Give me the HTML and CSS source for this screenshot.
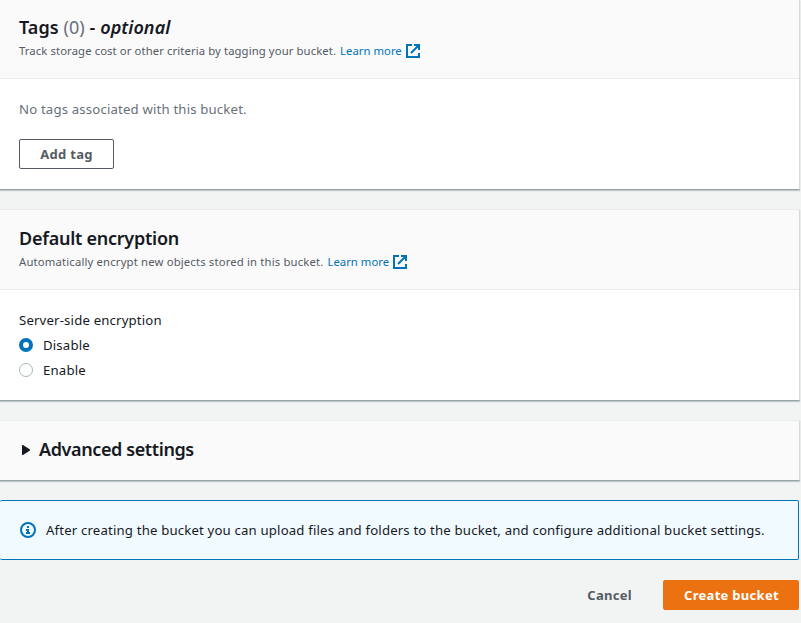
FILE: index.html
```html
<!DOCTYPE html>
<html lang="en">
<head>
<meta charset="utf-8">
<title>Create bucket</title>
<link rel="stylesheet" href="styles.css">
</head>
<body>
<main class="form">
  <section class="card tags">
    <header class="card-header">
      <h2 class="title-tags">Tags <span class="count">(0)</span> - <em>optional</em></h2>
      <p class="description"><span class="desc-tags">Track storage cost or other criteria by tagging your bucket.</span><a>Learn more</a><svg class="external" viewBox="0 0 14 14"><path d="M6 1H1v12h12V9M8 1h5v5M5 9l7.5-7.5"/></svg></p>
    </header>
    <div class="card-body">
      <p class="empty">No tags associated with this bucket.</p>
      <button class="button add-tag">Add tag</button>
    </div>
  </section>
  <section class="card encryption">
    <header class="card-header">
      <h2 class="title-encryption">Default encryption</h2>
      <p class="description"><span class="desc-encryption">Automatically encrypt new objects stored in this bucket.</span><a>Learn more</a><svg class="external" viewBox="0 0 14 14"><path d="M6 1H1v12h12V9M8 1h5v5M5 9l7.5-7.5"/></svg></p>
    </header>
    <div class="card-body">
      <p class="label">Server-side encryption</p>
      <label class="option"><i class="radio checked"></i>Disable</label>
      <label class="option"><i class="radio"></i>Enable</label>
    </div>
  </section>
  <section class="card advanced">
    <svg class="caret" viewBox="0 0 8 10"><path d="M0 0h1l7 4.5v1L1 10H0z"/></svg>
    <h2 class="title-advanced">Advanced settings</h2>
  </section>
  <aside class="notice">
    <svg class="info" viewBox="0 0 16 16"><circle cx="8" cy="8" r="7"/><path d="M7 5h2M6 8h2v3M6 11h4"/></svg>
    <span>After creating the bucket you can upload files and folders to the bucket, and configure additional bucket settings.</span>
  </aside>
  <footer class="actions">
    <button class="button cancel">Cancel</button>
    <button class="button create">Create bucket</button>
  </footer>
</main>
</body>
</html>
```
FILE: styles.css
```css
* { box-sizing: border-box; }
body { margin: 0; background: #f2f3f3; color: #16191f; font: 13.2px/20px "Noto Sans", sans-serif; letter-spacing: .165px; }
h2, p { margin: 0; }
.form { width: 800px; height: 623px; display: flex; flex-direction: column; }
.card { flex: none; background: #fff; margin-bottom: 20px; border-right: 1px solid #d5dbdb; border-bottom: 1px solid #95a5a6; box-shadow: 0 1px 1px #001c2433; }
.tags { height: 190px; }
.encryption { height: 192px; margin-top: -1px; border-top: 1px solid #eaeded; }
.card-header { height: 79px; padding: 16px 19px 0; background: #fafafa; border-bottom: 1px solid #eaeded; }
.encryption .card-header { height: 80px; padding-top: 17px; }
h2 { font-size: 18px; line-height: 22px; font-weight: 600; white-space: nowrap; }
.title-tags { letter-spacing: .07px; }
.title-encryption { letter-spacing: -.25px; }
.title-advanced { margin-top: -2px; letter-spacing: -.39px; }
.count { color: #687078; font-weight: 400; }
.description { display: flex; align-items: center; height: 26px; color: #545b64; font-size: 11.3px; letter-spacing: .1px; white-space: nowrap; }
.desc-encryption { letter-spacing: .163px; }
.description a { color: #0073bb; margin-left: 4px; letter-spacing: .02px; }
.external { width: 14px; height: 14px; margin-left: 4px; fill: none; stroke: #0073bb; stroke-width: 2; }
.card-body { padding: 20px 19px; }
.empty { color: #687078; }
.button { display: flex; align-items: center; justify-content: center; height: 30px; padding: 0; border: 1px solid #545b64; border-radius: 2px; background: #fff; color: #545b64; font: 700 13px/20px "Noto Sans", sans-serif; letter-spacing: .3px; }
.add-tag { width: 95px; margin-top: 20px; }
.label { margin-bottom: 2px; }
.option { display: flex; align-items: center; height: 25px; }
.radio { width: 14px; height: 14px; margin-right: 10px; border: 1px solid #aab7b8; border-radius: 50%; background: #fff; }
.checked { border: 4px solid #0073bb; }
.advanced { height: 61px; margin-top: -1px; display: flex; align-items: center; padding: 0 0 2px 22px; background: #fafafa; border-top: 1px solid #eaeded; }
.caret { width: 8px; height: 10px; margin-right: 9px; fill: #16191f; }
.notice { flex: none; display: flex; align-items: center; width: 799px; height: 60px; margin-top: -1px; padding-left: 20px; border: 1px solid #0073bb; border-left: 0; border-radius: 2px; background: #f1faff; white-space: nowrap; }
.info { width: 16px; height: 16px; margin-right: 10px; fill: none; stroke: #0073bb; stroke-width: 2; }
.actions { display: flex; justify-content: flex-end; padding: 20px 1px 0 0; }
.cancel { border: 0; background: none; margin-right: 31px; }
.create { width: 136px; padding-left: 1px; border-color: #ec7211; background: #ec7211; color: #fff; }
```
